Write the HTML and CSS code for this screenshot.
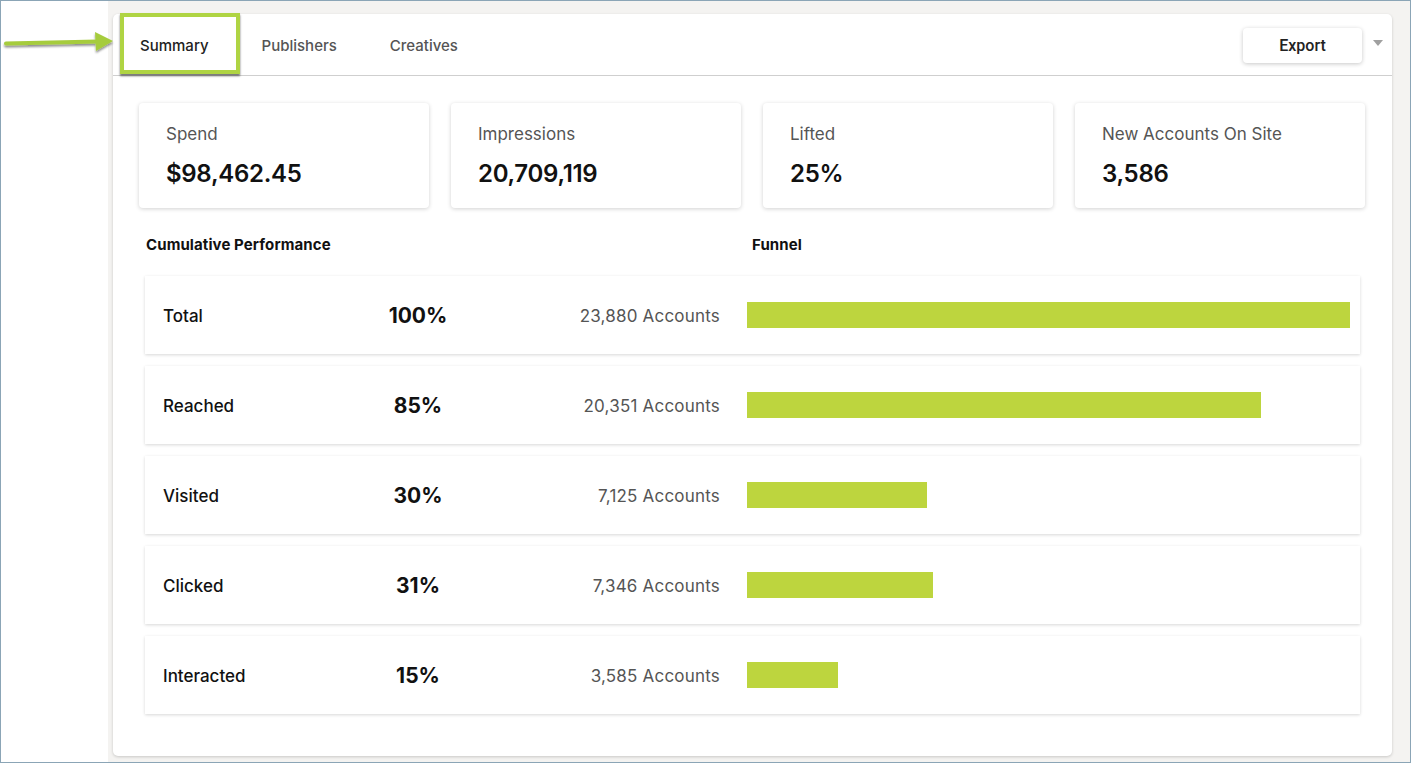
FILE: index.html
```html
<!DOCTYPE html>
<html>
<head>
<meta charset="utf-8">
<link rel="stylesheet" href="styles.css">
</head>
<body>
<div class="frame">
  <div class="gutter"></div>
  <div class="panel">
    <div class="card">
      <div class="tabbar">
        <div class="tabs">
          <div class="tab active">Summary</div>
          <div class="tab">Publishers</div>
          <div class="tab">Creatives</div>
        </div>
        <div class="actions">
          <button class="export">Export</button>
          <span class="caret"></span>
        </div>
      </div>
      <div class="content">
        <div class="stats">
          <div class="stat"><div class="stat-label">Spend</div><div class="stat-value">$98,462.45</div></div>
          <div class="stat"><div class="stat-label">Impressions</div><div class="stat-value">20,709,119</div></div>
          <div class="stat"><div class="stat-label">Lifted</div><div class="stat-value">25%</div></div>
          <div class="stat"><div class="stat-label">New Accounts On Site</div><div class="stat-value">3,586</div></div>
        </div>
        <div class="headings">
          <div class="heading">Cumulative Performance</div>
          <div class="heading">Funnel</div>
        </div>
        <div class="rows">
          <div class="row"><div class="r-label">Total</div><div class="r-pct">100%</div><div class="r-acc">23,880 Accounts</div><div class="r-bar"><div class="bar" style="width:100%"></div></div></div>
          <div class="row"><div class="r-label">Reached</div><div class="r-pct">85%</div><div class="r-acc">20,351 Accounts</div><div class="r-bar"><div class="bar" style="width:85.2%"></div></div></div>
          <div class="row"><div class="r-label">Visited</div><div class="r-pct">30%</div><div class="r-acc">7,125 Accounts</div><div class="r-bar"><div class="bar" style="width:29.8%"></div></div></div>
          <div class="row"><div class="r-label">Clicked</div><div class="r-pct">31%</div><div class="r-acc">7,346 Accounts</div><div class="r-bar"><div class="bar" style="width:30.8%"></div></div></div>
          <div class="row"><div class="r-label">Interacted</div><div class="r-pct">15%</div><div class="r-acc">3,585 Accounts</div><div class="r-bar"><div class="bar" style="width:15.1%"></div></div></div>
        </div>
      </div>
    </div>
  </div>
  <div class="highlight"></div>
  <svg class="arrow" width="116" height="30" viewBox="0 0 116 30">
    <defs>
      <filter id="sh" x="-10%" y="-30%" width="120%" height="180%">
        <feDropShadow dx="0" dy="2" stdDeviation="1.2" flood-color="#000" flood-opacity="0.45"/>
      </filter>
    </defs>
    <g filter="url(#sh)">
      <path d="M4 17.5 L96 15.5" stroke="#a6cc3d" stroke-width="4" stroke-linecap="round" fill="none"/>
      <path d="M93 6 L111 15 L94 25 Z" fill="#a6cc3d"/>
    </g>
  </svg>
</div>
</body>
</html>
```
FILE: styles.css
```css
* { box-sizing: border-box; }
html, body { margin: 0; padding: 0; background: #fff; }
body { font-family: Inter, "Noto Sans", sans-serif; color: #111; }

.frame {
  position: relative;
  width: 1411px;
  height: 763px;
  border: 1px solid #8ba5b6;
  display: flex;
  overflow: hidden;
}
.gutter { width: 107px; flex: none; background: #fff; }
.panel {
  flex: 1;
  background: #f4f3f1;
  padding: 13px 18px 6px 5px;
  display: flex;
}
.card {
  flex: 1;
  background: #fff;
  border-radius: 5px;
  box-shadow: 0 1px 3px rgba(0,0,0,0.18);
  display: flex;
  flex-direction: column;
}
.tabbar {
  height: 62px;
  border-bottom: 1px solid #cfcfcf;
  display: flex;
  align-items: center;
  justify-content: space-between;
  padding: 0 9px 0 27px;
}
.tabs { display: flex; gap: 53px; align-items: center; }
.tab { font-size: 15px; font-weight: 500; color: #555; padding-top: 1px; }
.tab.active { color: #222; }
.actions { display: flex; align-items: center; gap: 11px; }
.export {
  width: 119px;
  height: 35px;
  border: none;
  background: #fff;
  border-radius: 4px;
  box-shadow: 0 1px 4px rgba(0,0,0,0.22);
  font-family: Roboto, Inter, sans-serif;
  font-size: 16px;
  font-weight: 500;
  color: #222;
  margin-top: 1px;
}
.caret {
  width: 0; height: 0;
  border-left: 5px solid transparent;
  border-right: 5px solid transparent;
  border-top: 6px solid #a0a0a0;
  margin-top: -4px;
}
.content { padding: 27px 27px 41px 26px; }
.stats { display: grid; grid-template-columns: repeat(4, 1fr); gap: 22px; }
.stat {
  height: 105px;
  background: #fff;
  border-radius: 4px;
  box-shadow: 0 1px 4px rgba(0,0,0,0.18);
  padding: 21px 27px 19px;
}
.stat-label { font-size: 17px; line-height: 20px; color: #555; }
.stat-value { font-size: 24px; line-height: 30px; font-weight: 600; color: #111; margin-top: 15px; letter-spacing: -0.3px; }
.headings {
  display: grid;
  grid-template-columns: 606px 1fr;
  margin: 27px 0 21px 7px;
}
.heading { font-size: 15px; line-height: 20px; font-weight: 700; color: #111; letter-spacing: 0.1px; }
.rows { display: flex; flex-direction: column; gap: 12px; padding: 0 5px 0 6px; }
.row {
  height: 78px;
  background: #fff;
  box-shadow: 0 1px 3px rgba(0,0,0,0.16);
  display: grid;
  grid-template-columns: 200px 110px 247px 603px;
  align-items: center;
  padding: 1px 9px 0 18px;
}
.r-label { font-size: 17px; font-weight: 500; color: #111; }
.r-pct { font-size: 21px; font-weight: 700; text-align: center; color: #111; }
.r-acc { font-size: 17px; color: #555; text-align: right; letter-spacing: 0.2px; }
.r-bar { margin-left: 27px; height: 26px; width: 603px; margin-top: -1px; }
.bar { height: 26px; background: #bdd53e; }
.highlight {
  position: absolute;
  left: 119px;
  top: 12px;
  width: 120px;
  height: 61px;
  border: 4px solid #afd443;
  box-shadow: 0 2px 2px rgba(0,0,0,0.55);
}
.arrow { position: absolute; left: 1px; top: 25px; }
```
